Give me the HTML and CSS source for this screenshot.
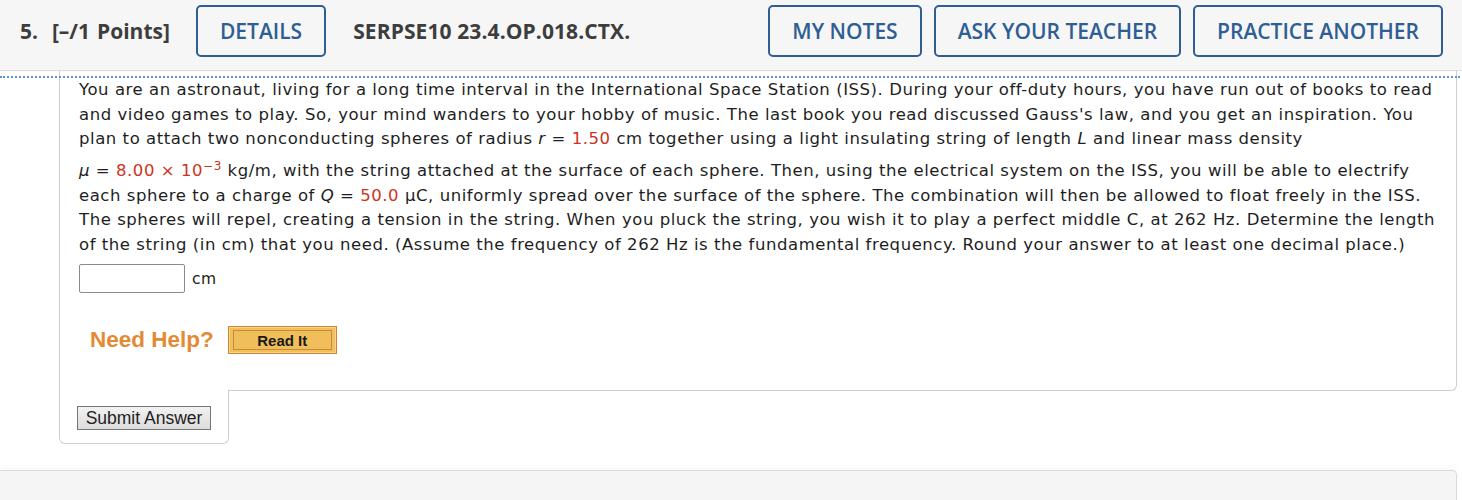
FILE: index.html
```html
<!DOCTYPE html>
<html>
<head>
<meta charset="utf-8">
<link rel="stylesheet" href="styles.css">
</head>
<body>
<div class="header">
  <span class="qnum">5.&nbsp; [–/1 Points]</span>
  <span class="hbtn details">DETAILS</span>
  <span class="code">SERPSE10 23.4.OP.018.CTX.</span>
  <span class="spacer"></span>
  <span class="hbtn">MY NOTES</span>
  <span class="hbtn">ASK YOUR TEACHER</span>
  <span class="hbtn">PRACTICE ANOTHER</span>
</div>
<div class="qwrap">
  <div class="qbox">
    <p class="qtext">You are an astronaut, living for a long time interval in the International Space Station (ISS). During your off-duty hours, you have run out of books to read<br>and video games to play. So, your mind wanders to your hobby of music. The last book you read discussed Gauss's law, and you get an inspiration. You<br>plan to attach two nonconducting spheres of radius <i>r</i> = <span class="red">1.50</span> cm together using a light insulating string of length <i>L</i> and linear mass density<br><span class="tall"><i>μ</i> = <span class="red">8.00 × 10<sup>−3</sup></span> kg/m, with the string attached at the surface of each sphere. Then, using the electrical system on the ISS, you will be able to electrify</span><br>each sphere to a charge of <i>Q</i> = <span class="red">50.0</span> μC, uniformly spread over the surface of the sphere. The combination will then be allowed to float freely in the ISS.<br>The spheres will repel, creating a tension in the string. When you pluck the string, you wish it to play a perfect middle C, at 262 Hz. Determine the length<br>of the string (in cm) that you need. (Assume the frequency of 262 Hz is the fundamental frequency. Round your answer to at least one decimal place.)</p>
    <div class="answer">
      <span class="input"></span>
      <span class="unit">cm</span>
    </div>
    <div class="help">
      <span class="needhelp">Need Help?</span>
      <span class="readit"><span class="readit-inner">Read It</span></span>
    </div>
  </div>
  <div class="tab">
    <span class="submit">Submit Answer</span>
  </div>
</div>
<div class="next"></div>
</body>
</html>
```
FILE: styles.css
```css
html, body {
  margin: 0;
  padding: 0;
  background: #fff;
}
body {
  font-family: "DejaVu Sans", Verdana, sans-serif;
  color: #222;
}
.header {
  display: flex;
  align-items: center;
  height: 52px;
  padding: 5px 19px 13px 20px;
  background: #f6f6f6;
  border-bottom: 1px solid #dedede;
  font-family: "Open Sans", sans-serif;
  font-weight: 700;
  font-size: 21px;
}
.qnum {
  color: #3d3d3d;
  word-spacing: 1.5px;
}
.code {
  color: #3d3d3d;
  margin-left: 27px;
  letter-spacing: 0.1px;
}
.spacer {
  flex: 1;
}
.hbtn {
  box-sizing: border-box;
  height: 52px;
  display: flex;
  align-items: center;
  padding: 0 22px;
  border: 2px solid #2e5e93;
  border-radius: 5px;
  color: #2e5e93;
  font-weight: 600;
  margin-left: 12px;
}
.hbtn.details {
  margin-left: 26px;
}
.qwrap {
  position: relative;
}
.qwrap::before {
  content: "";
  position: absolute;
  top: 5px;
  left: 0;
  right: 2px;
  border-top: 2px dotted #5b93df;
}
.qbox {
  margin-left: 59px;
  margin-right: 5px;
  border-left: 1px solid #cfcfcf;
  border-right: 1px solid #cfcfcf;
  border-bottom: 1px solid #cfcfcf;
  border-bottom-right-radius: 6px;
  padding: 7px 0 36px 19px;
}
.qtext {
  margin: 0;
  font-size: 16.5px;
  letter-spacing: 0.55px;
  line-height: 24.5px;
  color: #1e1e1e;
  white-space: nowrap;
}
.tall {
  display: inline-block;
  padding-top: 7.5px;
}
.qtext sup {
  font-size: 12px;
  line-height: 0;
}
.red {
  color: #cc3322;
}
.answer {
  display: flex;
  align-items: center;
  margin-top: 7px;
  height: 29px;
}
.input {
  box-sizing: border-box;
  width: 106px;
  height: 29px;
  border: 1px solid #8a8a8a;
  border-radius: 2px;
  background: #fff;
}
.unit {
  margin-left: 7px;
  font-size: 15.5px;
  letter-spacing: 0.4px;
}
.help {
  display: flex;
  align-items: center;
  margin-top: 33px;
  margin-left: 11px;
  height: 28px;
}
.needhelp {
  font-family: "Liberation Sans", Arial, sans-serif;
  font-weight: 700;
  font-size: 22.5px;
  color: #e48a35;
}
.readit {
  box-sizing: border-box;
  margin-left: 14px;
  width: 109px;
  height: 28px;
  padding: 3px 4px;
  background: #f0be5b;
  border: 1px solid #d9822c;
  box-shadow: inset 0 0 0 1px #f7d690;
}
.readit-inner {
  box-sizing: border-box;
  display: flex;
  align-items: center;
  justify-content: center;
  height: 100%;
  border: 1px solid #c98a3a;
  font-family: "Liberation Sans", Arial, sans-serif;
  font-weight: 700;
  font-size: 15px;
  color: #1a1a1a;
}
.tab {
  box-sizing: border-box;
  position: relative;
  margin-left: 59px;
  margin-top: -1px;
  width: 170px;
  border-left: 1px solid #cfcfcf;
  border-right: 1px solid #cfcfcf;
  border-bottom: 1px solid #cfcfcf;
  border-radius: 0 0 6px 6px;
  background: #fff;
  padding: 16px 0 13px 17px;
}
.submit {
  box-sizing: border-box;
  display: inline-flex;
  align-items: center;
  justify-content: center;
  width: 134px;
  height: 24px;
  border: 1px solid #767676;
  background: linear-gradient(#f2f2f2, #dcdcdc);
  font-family: "Liberation Sans", Arial, sans-serif;
  font-size: 17.5px;
  color: #222;
  vertical-align: top;
}
.next {
  margin-top: 26px;
  margin-right: 5px;
  height: 40px;
  background: #f5f5f5;
  border-top: 1px solid #dadada;
  border-right: 1px solid #dadada;
  border-top-right-radius: 5px;
  box-shadow: 0 -3px 6px rgba(0,0,0,0.03);
}
```
